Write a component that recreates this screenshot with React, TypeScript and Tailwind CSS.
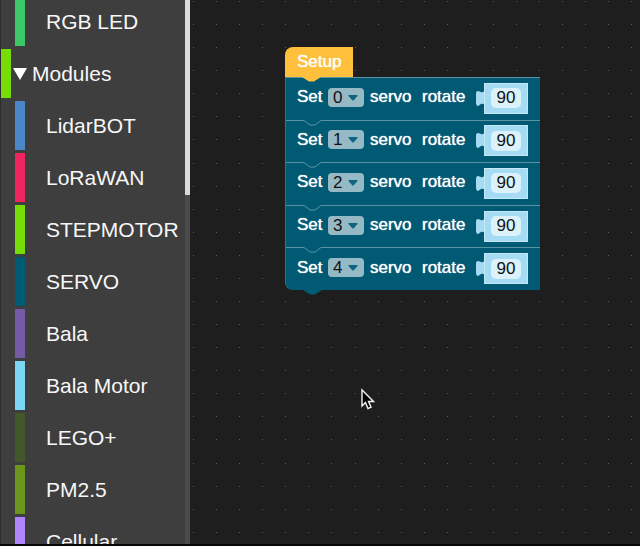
import React from "react";

type Category = { name: string; bar: string };

const modules: Category[] = [
  { name: "LidarBOT", bar: "bg-[#4a86c8]" },
  { name: "LoRaWAN", bar: "bg-[#f0245f]" },
  { name: "STEPMOTOR", bar: "bg-[#76dc05]" },
  { name: "SERVO", bar: "bg-[#005a73]" },
  { name: "Bala", bar: "bg-[#755ba5]" },
  { name: "Bala Motor", bar: "bg-[#7bd6f6]" },
  { name: "LEGO+", bar: "bg-[#43562c]" },
  { name: "PM2.5", bar: "bg-[#6c951b]" },
  { name: "Cellular", bar: "bg-[#ae84ff]" },
];

const servos = ["0", "1", "2", "3", "4"];

function CategoryRow({ name, bar }: Category) {
  return (
    <li className="pl-[15px]">
      <button type="button" className="flex h-[49px] w-full items-center gap-[21px] text-left">
        <span className={`h-full w-[10px] shrink-0 ${bar}`} />
        <span className="whitespace-nowrap">{name}</span>
      </button>
    </li>
  );
}

function Sidebar() {
  return (
    <nav
      aria-label="Block categories"
      className="flex w-[190px] shrink-0 overflow-hidden border-l border-[#2c2c2c] bg-[#3e3e3e] text-[21px] leading-6 text-[#f7f7f7] [text-shadow:0_0_1px_#ffffff99]"
    >
      <ul className="-ml-px -mt-[3px] flex min-w-0 flex-1 flex-col gap-[3px]">
        <CategoryRow name="RGB LED" bar="bg-[#3cc768]" />
        <li className="pl-px">
          <button
            type="button"
            aria-expanded="true"
            className="flex h-[49px] w-full items-center text-left"
          >
            <span className="h-full w-[10px] shrink-0 bg-[#76dc05]" />
            <svg className="ml-[2px] mr-[5px] shrink-0" width="14" height="12" viewBox="0 0 14 12" aria-hidden="true">
              <path d="M0 0H14L7 12Z" fill="#ffffff" />
            </svg>
            <span>Modules</span>
          </button>
        </li>
        {modules.map((m) => (
          <CategoryRow key={m.name} {...m} />
        ))}
      </ul>
      <div className="w-[5px] shrink-0 bg-[#4b4b4b]">
        <div className="h-[195px] bg-[#dadada]" />
      </div>
    </nav>
  );
}

function DotGrid() {
  const steps = Array.from({ length: 13 }, (_, i) => Math.round((i * 300) / 13));
  return (
    <svg className="absolute inset-0 h-full w-full" aria-hidden="true">
      <defs>
        <pattern id="dots" x="3" y="1" width="300" height="300" patternUnits="userSpaceOnUse">
          {steps.map((y) =>
            steps.map((x) => <rect key={`${x}-${y}`} x={x} y={y} width="1" height="1" fill="#5c5c5c" />)
          )}
        </pattern>
      </defs>
      <rect width="100%" height="100%" fill="url(#dots)" />
    </svg>
  );
}

function NumberBlock({ index }: { index: string }) {
  return (
    <div className="flex items-center">
      <svg className="-mr-px shrink-0" width="10" height="31" viewBox="0 0 10 31" aria-hidden="true">
        <path d="M10 5C10 8 8 10 6 9L3 8Q1 8 1 11V19Q1 23 3 23L6 21C8 20 10 21 10 24Z" fill="#a5dcf3" />
      </svg>
      <div className="flex h-[31px] w-11 items-center justify-center border border-[#c6e9f7] bg-[#a5dcf3]">
        <input
          type="text"
          defaultValue="90"
          aria-label={`Servo ${index} angle`}
          className="h-5 w-[30px] rounded-[5px] bg-[#dbf2fb] text-center text-[17px] leading-5 text-[#111111] outline-none"
        />
      </div>
    </div>
  );
}

function ServoBlock({ index, first }: { index: string; first: boolean }) {
  return (
    <div className="relative flex items-center pl-[11px] pr-3">
      <div className="absolute inset-x-0 top-0 h-px bg-[#5b93a5]" />
      {!first && (
        <svg className="absolute left-[17px] top-0" width="19" height="6" viewBox="0 0 19 6" aria-hidden="true">
          <path d="M1 0H18V1L12 5H7L1 1Z" fill="#005a73" />
          <path d="M0 .5H1L7 5H12L18 .5H19" fill="none" stroke="#5b93a5" />
        </svg>
      )}
      <div className="mr-auto flex items-center pb-[2px]">
        <span className="w-[31px]">Set</span>
        <div className="relative">
          <select
            defaultValue={index}
            aria-label={`Servo channel ${index}`}
            className="block h-[19px] w-9 appearance-none rounded-[4px] bg-[#96b9c6] pl-[5px] text-[17px] leading-[19px] text-[#111111] outline-none"
          >
            {servos.map((s) => (
              <option key={s} value={s}>
                {s}
              </option>
            ))}
          </select>
          <svg className="pointer-events-none absolute right-[6px] top-[7px]" width="10" height="6" viewBox="0 0 10 6" aria-hidden="true">
            <path d="M1 0H9Q10 0 9.500 1L6 5Q5 6 4 5L.5 1Q0 0 1 0Z" fill="#0b667e" />
          </svg>
        </div>
        <span className="ml-[6px] w-[52px]">servo</span>
        <span>rotate</span>
      </div>
      <NumberBlock index={index} />
    </div>
  );
}

function Program() {
  return (
    <div className="absolute left-[95px] top-[47px] w-[255px] text-[17px] leading-5 text-white [text-shadow:0_0_1px_#ffffff]">
      <div className="relative flex h-[30px] w-[68px] items-center rounded-tl-[8px] bg-[#fec03c] pl-3">
        Setup
        <svg className="absolute left-[17px] top-full z-10" width="19" height="5" viewBox="0 0 19 5" aria-hidden="true">
          <path d="M0 0H19L12 4.500H7Z" fill="#fec03c" />
        </svg>
      </div>
      <div className="relative grid h-[213px] grid-rows-5 rounded-bl-[8px] border-l border-[#2f7489] bg-[#005a73]">
        {servos.map((s, i) => (
          <ServoBlock key={s} index={s} first={i === 0} />
        ))}
        <svg className="absolute left-[17px] top-full" width="19" height="5" viewBox="0 0 19 5" aria-hidden="true">
          <path d="M0 0H19L12 4.500H7Z" fill="#005a73" />
        </svg>
      </div>
    </div>
  );
}

function Cursor() {
  return (
    <svg className="absolute left-[171px] top-[388px]" width="14" height="23" viewBox="0 0 14 23" aria-hidden="true">
      <path
        d="M1 2V18L4.500 14.500L7 20.500L10 19.200L7.500 13.500H12.500Z"
        fill="#000000"
        stroke="#f2f2f2"
        strokeWidth="1.400"
      />
    </svg>
  );
}

export default function App() {
  return (
    <div className="flex h-screen overflow-hidden border-b-2 border-[#060606] bg-[#1e1e1e] font-['Liberation_Sans',Arial,sans-serif]">
      <Sidebar />
      <main className="relative min-w-0 flex-1 overflow-hidden">
        <DotGrid />
        <Program />
        <Cursor />
      </main>
    </div>
  );
}
